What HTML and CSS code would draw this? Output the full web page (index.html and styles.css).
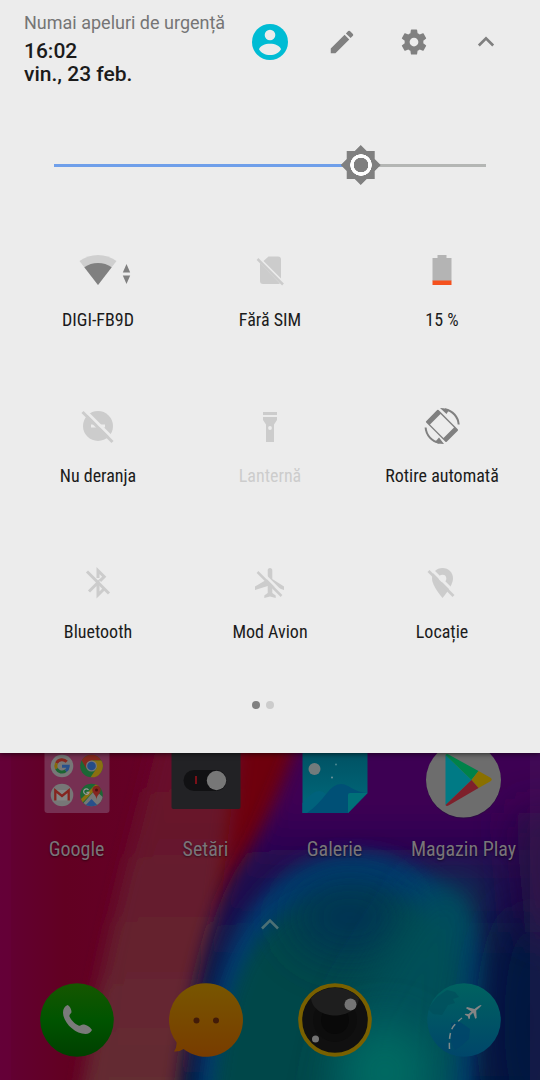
FILE: index.html
```html
<!DOCTYPE html>
<html lang="ro">
<head>
<meta charset="utf-8">
<meta name="viewport" content="width=device-width, initial-scale=1">
<title>Setări rapide</title>
<link rel="stylesheet" href="styles.css">
</head>
<body>
<section class="panel">
  <header class="header">
    <div class="status">
      <p class="carrier">Numai apeluri de urgență</p>
      <p class="clock">16:02</p>
      <p class="clock">vin., 23 feb.</p>
    </div>
    <nav class="actions">
      <button class="action" aria-label="Utilizator"><svg class="avatar" viewBox="0 0 36 36"><circle cx="18" cy="18" r="18" fill="#00bcd4"/><circle cx="18" cy="11" r="5.300" fill="#ececec"/><path d="M7 25.200C8 21.700 13 19.700 18 19.700S28 21.700 29 25.200C27 28.900 22.800 31 18 31S9 28.900 7 25.200z" fill="#ececec"/></svg></button>
      <button class="action" aria-label="Editează"><svg class="glyph" viewBox="0 0 24 24"><path d="M3 17.250V21h3.750L17.810 9.940l-3.750-3.750L3 17.250zM20.710 7.040a1 1 0 0 0 0-1.410l-2.340-2.340a1 1 0 0 0-1.410 0l-1.830 1.830 3.750 3.750 1.830-1.830z"/></svg></button>
      <button class="action" aria-label="Setări"><svg class="glyph" viewBox="0 0 24 24"><path d="M19.430 12.980c.04-.32.07-.64.07-.98s-.03-.66-.07-.98l2.110-1.650c.19-.15.24-.42.12-.64l-2-3.460c-.12-.22-.39-.3-.61-.22l-2.490 1c-.52-.4-1.080-.73-1.690-.98l-.38-2.650C14.460 2.180 14.250 2 14 2h-4c-.25 0-.46.18-.49.42l-.38 2.650c-.61.25-1.170.59-1.690.98l-2.490-1c-.23-.09-.49 0-.61.22l-2 3.460c-.13.22-.07.49.12.64l2.110 1.650c-.04.32-.07.65-.07.98s.03.66.07.98l-2.110 1.650c-.19.15-.24.42-.12.64l2 3.460c.12.22.39.3.61.22l2.490-1c.52.4 1.080.73 1.690.98l.38 2.650c.03.24.24.42.49.42h4c.25 0 .46-.18.49-.42l.38-2.650c.61-.25 1.170-.59 1.690-.98l2.490 1c.23.09.49 0 .61-.22l2-3.460c.12-.22.07-.49-.12-.64l-2.110-1.650zM12 15.500c-1.930 0-3.500-1.570-3.500-3.500s1.570-3.500 3.500-3.500 3.500 1.570 3.500 3.500-1.570 3.500-3.500 3.500z"/></svg></button>
      <button class="action" aria-label="Restrânge"><svg class="glyph" viewBox="0 0 24 24"><path d="M12 7.500l-6.500 6.500 1.500 1.500 5-5 5 5 1.500-1.500z"/></svg></button>
    </nav>
  </header>

  <div class="brightness"><input class="slider" type="range" min="0" max="100" value="71" aria-label="Luminozitate"></div>

  <div class="tiles">
    <button class="tile"><svg class="icon wide" viewBox="0 0 72 40"><path d="M36 35L17.500 11C28 3 44 3 54.500 11z" fill="#cfcfcf"/><path d="M36 35L22.300 17.200C30 11.500 42 11.500 49.700 17.200z" fill="#808080"/><path d="M64.500 14l3.700 8.500h-7.400zM64.500 34l3.700-8.500h-7.400z" fill="#808080"/></svg><span>DIGI-FB9D</span></button>
    <button class="tile"><svg class="icon" viewBox="0 0 40 40" fill="#cccccc"><path d="M18.500 6.500H28a3 3 0 0 1 3 3V28.500L13.500 11z"/><path d="M10 13v18a3 3 0 0 0 3 3h15.500a3 3 0 0 0 1.500-.5z"/><path d="M7.500 9L33 34.500" stroke="#cccccc" stroke-width="2.500"/></svg><span>Fără SIM</span></button>
    <button class="tile"><svg class="icon" viewBox="0 0 40 40"><path d="M10.500 8h5V5h9v3h5v23h-19z" fill="#b4b4b4"/><path d="M10.500 30.500h19v4.500h-19z" fill="#f4511e"/></svg><span>15 %</span></button>
    <button class="tile"><svg class="icon" viewBox="0 0 40 40"><circle cx="20" cy="20" r="15" fill="#cccccc"/><path d="M13 18.500h14v3H13z" fill="#ececec"/><path d="M6 3.500L36 33.500" stroke="#ececec" stroke-width="3"/><path d="M4.500 6L34.500 36" stroke="#cccccc" stroke-width="3"/></svg><span>Nu deranja</span></button>
    <button class="tile off" disabled><svg class="icon" viewBox="0 0 40 40"><path d="M13 6h14v3H13zM13 11h14v3l-3 4.500V36h-8V18.500L13 14z" fill="#cccccc"/><circle cx="20" cy="22" r="1.900" fill="#ececec"/></svg><span>Lanternă</span></button>
    <button class="tile"><svg class="icon" viewBox="0 0 40 40"><path d="M15.500 5L35.500 25 24 36.500 4 16.500z" fill="#808080" stroke="#808080" stroke-width="2" stroke-linejoin="round" transform="translate(1 0) scale(.96)"/><path d="M18.500 8.500L32 22 21.500 32.500 8 19z" fill="#ececec" transform="translate(0 -.5)"/><path d="M3.600 21.500A16.700 16.700 0 0 0 17.500 36.800M36.700 18.500A16.700 16.700 0 0 0 23 3.200" fill="none" stroke="#808080" stroke-width="2"/><path d="M18 2c5 0 8 1 9 2l-2.500 4zM22 38c-5 0-8-1-9-2l4-4.500z" fill="#808080"/></svg><span>Rotire automată</span></button>
    <button class="tile"><svg class="icon" viewBox="0 0 40 40" fill="none" stroke="#cccccc" stroke-width="3"><path d="M20 16V8.500l6.200 6.200-4.200 4.200M11 29.500l9-9v12.500l6-6"/><path d="M9 9.500L31 31.500"/></svg><span>Bluetooth</span></button>
    <button class="tile"><svg class="icon" viewBox="0 0 40 40"><path d="M20 6c-1.500 0-2.300 1-2.300 2.500V17L5 24.500V28l12.700-4v7l-3.400 2.500V36l5.700-1.500 5.700 1.500v-2.500L22.300 31v-7L34 28v-3.500L22.300 17V8.500C22.300 7 21.500 6 20 6z" fill="#cccccc"/><path d="M9 7.500L35 33.500" stroke="#ececec" stroke-width="2.500"/><path d="M7.500 10L31.500 34" stroke="#cccccc" stroke-width="2.500"/></svg><span>Mod Avion</span></button>
    <button class="tile"><svg class="icon" viewBox="0 0 40 40"><path d="M20.500 6C14.500 6 10 10.500 10 16.500 10 24 20.500 36 20.500 36S31 24 31 16.500C31 10.500 26.500 6 20.500 6z" fill="#cccccc"/><circle cx="20.500" cy="16.500" r="3.800" fill="#ececec"/><path d="M9 7L34 32" stroke="#ececec" stroke-width="3"/><path d="M6.500 9L31.500 34" stroke="#cccccc" stroke-width="2.700"/></svg><span>Locație</span></button>
  </div>
  <div class="dots"><i class="dot current"></i><i class="dot"></i></div>
</section>

<main class="home">
  <svg class="wallpaper" viewBox="0 0 540 328" preserveAspectRatio="none" aria-hidden="true">
    <defs>
      <filter id="soft" filterUnits="userSpaceOnUse" x="-100" y="-100" width="740" height="530"><feGaussianBlur stdDeviation="9"/></filter>
      <filter id="haze" filterUnits="userSpaceOnUse" x="-100" y="-100" width="740" height="530"><feGaussianBlur stdDeviation="22"/></filter>
      <linearGradient id="base" x1="0" x2="1"><stop offset="0" stop-color="#620034"/><stop offset=".12" stop-color="#620022"/><stop offset=".3" stop-color="#650027"/></linearGradient>
      <linearGradient id="band" x1="0" y1="0" x2="0" y2="1"><stop offset="0" stop-color="#69082a"/><stop offset=".4" stop-color="#651c2d"/><stop offset="1" stop-color="#643033"/></linearGradient>
      <linearGradient id="sky" x1="0" y1="0" x2="0" y2="1"><stop offset="0" stop-color="#420052"/><stop offset=".28" stop-color="#3c0052"/><stop offset=".42" stop-color="#200a50"/><stop offset=".6" stop-color="#101747"/><stop offset="1" stop-color="#00163d"/></linearGradient>
    </defs>
    <path d="M0 0h540v328H0z" fill="url(#base)"/>
    <path d="M165-40L125 120Q108 190 98 240L78 370H230L300-40z" fill="url(#band)" filter="url(#soft)"/>
    <path d="M245-60L232 50Q224 120 220 160L250 130 340-60z" fill="#6e000c" filter="url(#soft)"/>
    <path d="M318-80Q285 45 240 110Q192 185 172 400H640V-80z" fill="url(#sky)" filter="url(#soft)"/>
    <path d="M192 400Q200 260 232 190T325 105Q385 90 440 130T480 260L470 400z" fill="#003a70" filter="url(#soft)"/>
    <path d="M208 400Q216 260 247 205T325 145Q380 130 420 160T450 270L430 400z" fill="#004648" filter="url(#soft)"/>
    <ellipse cx="350" cy="165" rx="60" ry="42" fill="#003552" filter="url(#haze)"/>
    <path d="M320 400L350 260 430 130 480 130 460 270 450 400z" fill="#005058" filter="url(#haze)"/>
    <ellipse cx="385" cy="320" rx="45" ry="50" fill="#006a62" filter="url(#haze)"/>
    <ellipse cx="530" cy="270" rx="40" ry="120" fill="#00133f" filter="url(#haze)"/>
    <path d="M515 60h90v120h-80z" fill="#26093f" filter="url(#haze)"/>
    <path d="M530 0h10v328h-10z" fill="#4a245c" opacity=".25"/>
    <path d="M0 0h11v328H0z" fill="#70004a" opacity=".2"/>
  </svg>

  <div class="apps">
    <a class="app" href="#google"><svg class="app-icon" viewBox="0 0 80 66">
      <path d="M7.500 0h65v57a3 3 0 0 1-3 3h-59a3 3 0 0 1-3-3z" fill="#763052"/>
      <circle cx="25" cy="13" r="11.300" fill="#777"/>
      <g transform="translate(-.5 0)" fill="none" stroke-width="3"><path d="M30.200 8.800A6.200 6.200 0 0 0 20 10.200" stroke="#872820"/><path d="M20 10.200a6.200 6.200 0 0 0 0 5.600" stroke="#87690b"/><path d="M20 15.800a6.200 6.200 0 0 0 9.200 2" stroke="#1c6533"/><path d="M29.200 17.800A6 6 0 0 0 31.700 13.300H25.500" stroke="#28508a"/></g>
      <circle cx="54.500" cy="13" r="11.300" fill="#1c6735"/><path d="M44.700 7.400A11.300 11.300 0 0 1 64.300 7.400H54.500L49.500 16z" fill="#85291f"/><path d="M64.300 7.400A11.300 11.300 0 0 1 53.500 24.300L59.500 15.500 54.500 7.400z" fill="#8a7011"/><circle cx="54.500" cy="13" r="5.500" fill="#777"/><circle cx="54.500" cy="13" r="4.300" fill="#244b88"/>
      <circle cx="25" cy="42" r="11.300" fill="#777"/><path d="M18 37h14v10.500H18z" fill="#858585"/><path d="M18.300 47.500V37.500l6.700 5.500 6.700-5.500v10" fill="none" stroke="#85251f" stroke-width="2.300"/>
      <clipPath id="map"><circle cx="54.500" cy="42" r="11.300"/></clipPath>
      <g clip-path="url(#map)"><path d="M43 30h23v24H43z" fill="#1c6735"/><path d="M43 54L58 37l10 9v8z" fill="#777"/><path d="M46 55l8.500-9 8.500 9z" fill="#28508a"/><path d="M42 48L60 30l3 2-19 19z" fill="#8a7011"/></g>
      <path d="M59.500 47c0-5-4.200-6.500-4.200-10a4.200 4.200 0 0 1 8.400 0C63.700 40.500 59.500 42 59.500 47z" fill="#85251f"/><circle cx="59.500" cy="37" r="1.500" fill="#4a1010"/><path d="M51.500 37a2.700 2.700 0 1 0 .5 2.300h-2.500" fill="none" stroke="#999" stroke-width="1.200"/>
    </svg><span>Google</span></a>
    <a class="app" href="#setari"><svg class="app-icon" viewBox="0 0 80 66">
      <path d="M5.500 0h69v54a2 2 0 0 1-2 2h-65a2 2 0 0 1-2-2z" fill="#222225"/><rect x="17.500" y="17" width="43" height="21" rx="10.500" fill="#111113"/><path d="M30 23v8" stroke="#7a1018" stroke-width="2"/><circle cx="50.500" cy="27.500" r="9.700" fill="#777"/>
    </svg><span>Setări</span></a>
    <a class="app" href="#galerie"><svg class="app-icon" viewBox="0 0 80 66">
      <defs><linearGradient id="gal" x1="0" y1="0" x2="0" y2="1"><stop offset="0" stop-color="#005264"/><stop offset="1" stop-color="#006a7c"/></linearGradient></defs>
      <path d="M7.500 0h65v40L53 60H7.500z" fill="url(#gal)"/><path d="M7.500 50Q22 32 31 41L20 60H7.500z" fill="#00627c"/><path d="M12 60Q22 53 32 40T53 33Q64 40 72.500 40L53 60z" fill="#005076"/><path d="M53 60V42q0-2 2-2h17.500z" fill="#007078"/><circle cx="19.500" cy="16" r="6" fill="#727b7c"/><circle cx="41" cy="11.500" r="1" fill="#4a8791"/><circle cx="37" cy="24.500" r="1" fill="#6f949a"/>
    </svg><span>Galerie</span></a>
    <a class="app" href="#play"><svg class="app-icon" viewBox="0 0 80 66">
      <circle cx="39.500" cy="28" r="37.500" fill="#26103a" opacity=".6"/><circle cx="39.500" cy="27" r="37.500" fill="#6d6d6d"/><path d="M21.500 2v50l26-25z" fill="#007a85"/><path d="M21.500 2q1-1.500 3-.5L54.500 18l-7 9z" fill="#008249"/><path d="M54.500 18l12.500 7q1.500 1.500 0 3L54.500 35l-7-8z" fill="#8a7000"/><path d="M21.500 52q1 1.500 3 .5L54.500 35l-7-8z" fill="#7e202b"/>
    </svg><span>Magazin Play</span></a>
  </div>

  <button class="drawer" aria-label="Toate aplicațiile"><svg viewBox="0 0 20 12"><path d="M2 10.500l8-8 8 8" fill="none" stroke="#4c7075" stroke-width="2.500"/></svg></button>

  <div class="dock">
    <a class="dock-app" href="#telefon" aria-label="Telefon"><svg viewBox="0 0 74 76"><defs><linearGradient id="ph" x1="0" y1="0" x2="0" y2="1"><stop offset="0" stop-color="#165600"/><stop offset=".5" stop-color="#005400"/><stop offset="1" stop-color="#004000"/></linearGradient></defs><circle cx="37" cy="37" r="36.800" fill="url(#ph)"/><path d="M27.500 22c-3 1.500-4.500 4-4.500 7.500 0 10 12 21.500 22.500 21.500 3 0 5-1.500 6.500-4-1.500-3-5.500-5.500-9-5.500-1.500 0-2.500 1.800-4.500 1-3.500-1.500-7.500-5.500-9-9-.7-2 2-3 2-4.500 0-2.500-1.500-6-4-7z" fill="#7a7a7a"/></svg></a>
    <a class="dock-app" href="#mesaje" aria-label="Mesaje"><svg viewBox="0 0 74 76"><defs><linearGradient id="ms" x1="0" y1="0" x2="0" y2="1"><stop offset="0" stop-color="#785600"/><stop offset="1" stop-color="#783c00"/></linearGradient></defs><path d="M37 .2A36.800 36.800 0 1 1 14.500 66Q10 69 5 68.500 8 65 7.500 59.200A36.800 36.800 0 0 1 37 .2z" fill="url(#ms)"/><circle cx="27.500" cy="37.500" r="3" fill="#421b08"/><circle cx="47" cy="37.500" r="3" fill="#421b08"/></svg></a>
    <a class="dock-app" href="#camera" aria-label="Cameră"><svg viewBox="0 0 74 76"><circle cx="37" cy="37" r="34.800" fill="#101010" stroke="#796000" stroke-width="4"/><circle cx="37" cy="37" r="22" fill="#0d0d0d"/><circle cx="37" cy="37" r="14" fill="#090909"/><path d="M13 15a33 33 0 0 1 48 0C60 26 49 32.500 37 32.500S14 26 13 15z" fill="#1e1e1e"/><circle cx="52.500" cy="21.500" r="6" fill="#747474"/><circle cx="17.500" cy="56" r="3.500" fill="#747474"/></svg></a>
    <a class="dock-app" href="#browser" aria-label="Browser"><svg viewBox="0 0 74 76"><defs><linearGradient id="br" x1="0" y1="0" x2="0" y2="1"><stop offset="0" stop-color="#006260"/><stop offset="1" stop-color="#00466a"/></linearGradient></defs><circle cx="37" cy="37" r="36.800" fill="url(#br)"/><path d="M10 14l10-7 8 2 4 5-6 2 2 4-7 2-6 10-9-1-5-5z" fill="#00505c" opacity=".8"/><path d="M24 40l9-1 10 7-1 10-8 7-6 4-4-8z" fill="#00456a" opacity=".8"/><path d="M22.500 66q-1-18 5-24T35 35" fill="none" stroke="#7e8a8b" stroke-width="1.500" stroke-dasharray="6 4"/><path d="M54.500 22q-1.500-.5-7 4L40 24l-1 1.300 5.500 3.200-3 2.500-3-.3-.8 1 3 1.500 1 3 1.200-.7.300-3 3-2.700 2 6 1.500-.8-.5-7.500q5.500-4.500 5.300-5.500z" fill="#858585"/></svg></a>
  </div>
</main>
</body>
</html>
```
FILE: styles.css
```css
* { box-sizing: border-box; }

body {
  margin: 0;
  min-height: 100vh;
  display: flex;
  flex-direction: column;
  background: #00163d;
  font-family: Roboto, "Noto Sans", sans-serif;
}

p { margin: 0; }

svg { display: block; }

button {
  margin: 0;
  padding: 0;
  border: 0;
  background: none;
  font: inherit;
  color: inherit;
}

a { color: inherit; text-decoration: none; }

/* Quick settings panel */
.panel {
  position: relative;
  z-index: 1;
  padding-bottom: 44px;
  background: #ececec;
  box-shadow: 0 1px 5px rgba(0, 0, 0, 0.6);
}

.header {
  display: flex;
  justify-content: space-between;
  padding: 6px 18px 0 24px;
}

.status {
  padding-top: 5px;
  white-space: nowrap;
}

.carrier {
  margin-bottom: 5px;
  font-size: 18px;
  line-height: 24px;
  color: #757575;
}

.clock {
  font-size: 21px;
  font-weight: 500;
  line-height: 23px;
  color: #1b1b1b;
}

.actions { display: flex; }

.action {
  display: grid;
  place-items: center;
  width: 72px;
  height: 72px;
}

.avatar { width: 36px; height: 36px; }

.glyph { width: 30px; height: 30px; fill: #808080; }

.brightness {
  padding: 59px 34px 0;
}

.slider {
  display: block;
  width: 100%;
  height: 40px;
  margin: 0;
  appearance: none;
  background: linear-gradient(to right, #6f9fea 71%, #b4b6b4 71%) center / calc(100% - 40px) 3px no-repeat;
}

.slider::-webkit-slider-thumb {
  appearance: none;
  width: 40px;
  height: 40px;
  background: radial-gradient(circle, #808080 7px, #fff 7.5px, #fff 10.5px, #808080 11px);
  clip-path: polygon(20px 0, 26px 6px, 34px 6px, 34px 14px, 40px 20px, 34px 26px, 34px 34px, 26px 34px, 20px 40px, 14px 34px, 6px 34px, 6px 26px, 0 20px, 6px 14px, 6px 6px, 14px 6px);
}

.tiles {
  display: grid;
  grid-template-columns: repeat(3, 1fr);
  grid-auto-rows: 156px;
  padding: 48px 12px 0;
}

.tile {
  display: flex;
  flex-direction: column;
  align-items: center;
  justify-content: flex-start;
  gap: 18px;
  padding-top: 17px;
  font-family: "Roboto Condensed", Roboto, sans-serif;
  font-size: 18px;
  line-height: 24px;
  color: #1b1b1b;
}

.tile.off { color: #cccccc; }

.icon { width: 40px; height: 40px; }

.icon.wide { width: 72px; }

.dots {
  display: flex;
  justify-content: center;
  gap: 6px;
  padding-right: 15px;
}

.dot {
  width: 8px;
  height: 8px;
  border-radius: 50%;
  background: #cccccc;
}

.dot.current { background: #808080; }

/* Home screen under the shade */
.home {
  position: relative;
  flex: 1;
  display: flex;
  flex-direction: column;
  overflow: hidden;
}

.wallpaper {
  position: absolute;
  inset: 0;
  width: 100%;
  height: 100%;
}

.apps,
.dock {
  position: relative;
  display: grid;
  grid-template-columns: repeat(4, 1fr);
  justify-items: center;
  padding: 0 12px;
}

.app {
  display: flex;
  flex-direction: column;
  align-items: center;
  gap: 17px;
  font-family: "Roboto Condensed", Roboto, sans-serif;
  font-size: 20px;
  line-height: 26px;
  color: #797579;
  text-shadow: 0 1px 2px rgba(0, 0, 0, 0.5);
  white-space: nowrap;
}

.app-icon { width: 80px; height: 66px; }

.drawer {
  position: relative;
  align-self: center;
  padding: 56px 12px 53px;
}

.drawer svg { width: 20px; height: 12px; }

.dock-app svg { width: 74px; height: 76px; }
```
